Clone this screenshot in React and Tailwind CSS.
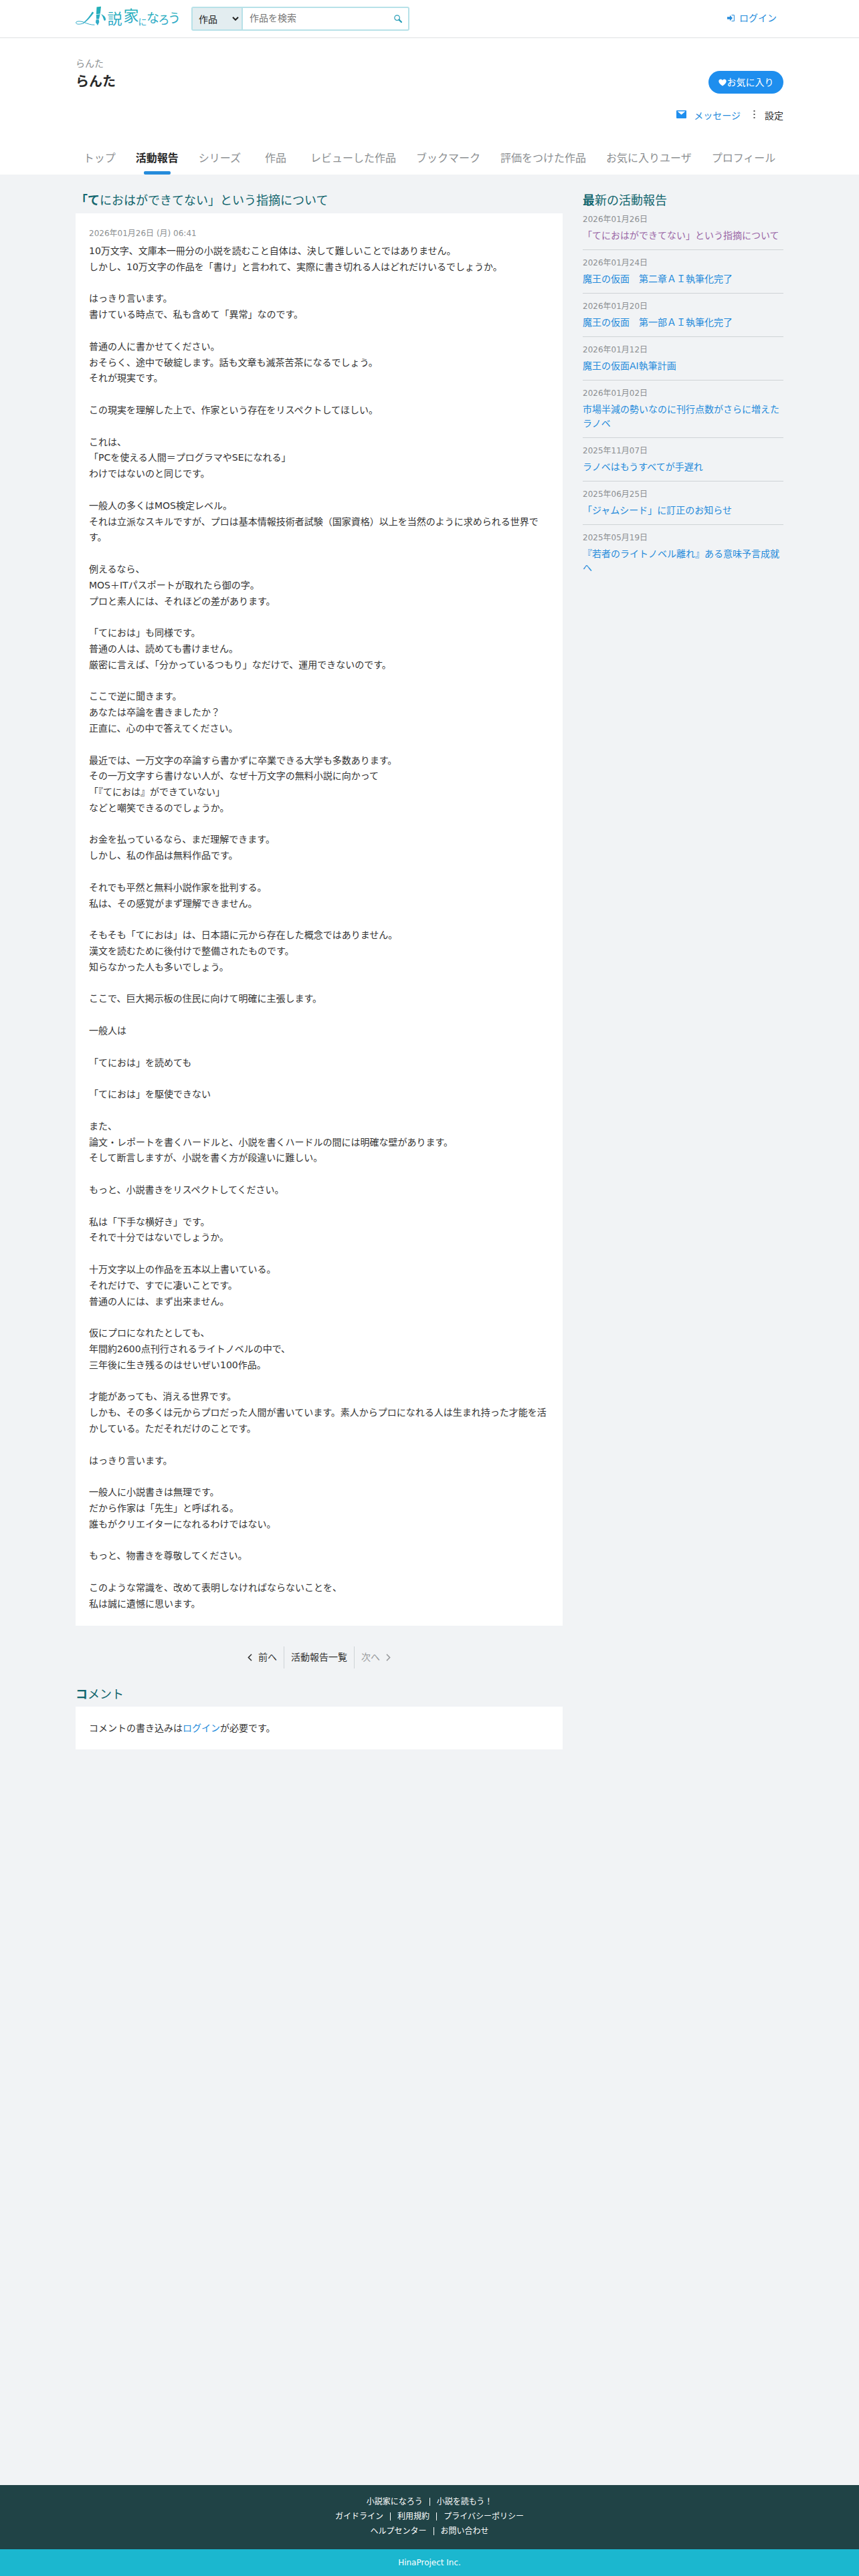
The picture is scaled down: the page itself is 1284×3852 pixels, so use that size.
const navItems = [
  "トップ",
  "活動報告",
  "シリーズ",
  "作品",
  "レビューした作品",
  "ブックマーク",
  "評価をつけた作品",
  "お気に入りユーザ",
  "プロフィール",
]

const article = `10万文字、文庫本一冊分の小説を読むこと自体は、決して難しいことではありません。
しかし、10万文字の作品を「書け」と言われて、実際に書き切れる人はどれだけいるでしょうか。

はっきり言います。
書けている時点で、私も含めて「異常」なのです。

普通の人に書かせてください。
おそらく、途中で破綻します。話も文章も滅茶苦茶になるでしょう。
それが現実です。

この現実を理解した上で、作家という存在をリスペクトしてほしい。

これは、
「PCを使える人間＝プログラマやSEになれる」
わけではないのと同じです。

一般人の多くはMOS検定レベル。
それは立派なスキルですが、プロは基本情報技術者試験（国家資格）以上を当然のように求められる世界です。

例えるなら、
MOS＋ITパスポートが取れたら御の字。
プロと素人には、それほどの差があります。

「てにおは」も同様です。
普通の人は、読めても書けません。
厳密に言えば、「分かっているつもり」なだけで、運用できないのです。

ここで逆に聞きます。
あなたは卒論を書きましたか？
正直に、心の中で答えてください。

最近では、一万文字の卒論すら書かずに卒業できる大学も多数あります。
その一万文字すら書けない人が、なぜ十万文字の無料小説に向かって
「『てにおは』ができていない」
などと嘲笑できるのでしょうか。

お金を払っているなら、まだ理解できます。
しかし、私の作品は無料作品です。

それでも平然と無料小説作家を批判する。
私は、その感覚がまず理解できません。

そもそも「てにおは」は、日本語に元から存在した概念ではありません。
漢文を読むために後付けで整備されたものです。
知らなかった人も多いでしょう。

ここで、巨大掲示板の住民に向けて明確に主張します。

一般人は

「てにおは」を読めても

「てにおは」を駆使できない

また、
論文・レポートを書くハードルと、小説を書くハードルの間には明確な壁があります。
そして断言しますが、小説を書く方が段違いに難しい。

もっと、小説書きをリスペクトしてください。

私は「下手な横好き」です。
それで十分ではないでしょうか。

十万文字以上の作品を五本以上書いている。
それだけで、すでに凄いことです。
普通の人には、まず出来ません。

仮にプロになれたとしても、
年間約2600点刊行されるライトノベルの中で、
三年後に生き残るのはせいぜい100作品。

才能があっても、消える世界です。
しかも、その多くは元からプロだった人間が書いています。素人からプロになれる人は生まれ持った才能を活かしている。ただそれだけのことです。

はっきり言います。

一般人に小説書きは無理です。
だから作家は「先生」と呼ばれる。
誰もがクリエイターになれるわけではない。

もっと、物書きを尊敬してください。

このような常識を、改めて表明しなければならないことを、
私は誠に遺憾に思います。`

const reports = [
  { date: "2026年01月26日", title: "「てにおはができてない」という指摘について", visited: true },
  { date: "2026年01月24日", title: "魔王の仮面　第二章ＡＩ執筆化完了" },
  { date: "2026年01月20日", title: "魔王の仮面　第一部ＡＩ執筆化完了" },
  { date: "2026年01月12日", title: "魔王の仮面AI執筆計画" },
  { date: "2026年01月02日", title: "市場半減の勢いなのに刊行点数がさらに増えたラノベ" },
  { date: "2025年11月07日", title: "ラノベはもうすべてが手遅れ" },
  { date: "2025年06月25日", title: "「ジャムシード」に訂正のお知らせ" },
  { date: "2025年05月19日", title: "『若者のライトノベル離れ』ある意味予言成就へ" },
]

const footerLinks = [
  ["小説家になろう", "小説を読もう！"],
  ["ガイドライン", "利用規約", "プライバシーポリシー"],
  ["ヘルプセンター", "お問い合わせ"],
]

function Logo() {
  return (
    <svg width="156" height="34" viewBox="0 0 156 34" className="shrink-0">
      <defs>
        <linearGradient id="logo" gradientUnits="userSpaceOnUse" x1="0" y1="0" x2="0" y2="34">
          <stop offset="0" stopColor="#20b0b4" />
          <stop offset="1" stopColor="#35a9cf" />
        </linearGradient>
      </defs>
      <g fill="url(#logo)">
        {/* ペンと飾り線 */}
        <path d="M31.5 1.5 L38 0.8 L36.8 11.5 L30.9 12.2 Z" />
        <path d="M30.8 13 L36.6 12.3 L35 19.5 L31 19.5 Z" />
        <path d="M30.6 20.3 L34.6 20.3 L35.3 24 L33 29 L30 24.5 Z" />
        <path d="M38 12 C42 13.5 45.5 17 45 20.5 C44.8 22 43 22.5 42.3 21 C41.3 18 40.5 15 38 12 Z" />
        <path d="M25 8.5 L27.3 10 C23 16 18 22 12 26 L11 25.4 C17 20.5 21 15 25 8.5 Z" />
        <path
          d="M12 25.7 C6 28 0.6 27.5 0.6 25 C0.8 22 8 22.5 13 24.5 C18 26.5 23 28.5 28 28.2"
          fill="none"
          stroke="url(#logo)"
          strokeWidth="1"
          strokeLinecap="round"
        />
        <text x="47.5" y="27" fontSize="22">説</text>
        <text x="71.5" y="22.5" fontSize="23">家</text>
        <text x="93.5" y="27.5" fontSize="13">に</text>
        <text x="106" y="24.5" fontSize="19">な</text>
        <text x="123.5" y="27" fontSize="17">ろ</text>
        <text x="138" y="24.5" fontSize="19">う</text>
      </g>
    </svg>
  )
}

function Header() {
  return (
    <header className="h-[57px] border-b border-[#dfe1e3] bg-white">
      <div className="mx-auto flex w-[1058px] items-start">
        <div className="w-[173px] pt-[9px]">
          <Logo />
        </div>
        <div className="mt-[10px] flex h-9 w-[326px] rounded-[3px] border-2 border-[#b7e1e8]">
          <div className="flex w-[75px] items-center justify-between border-r-2 border-[#b7e1e8] bg-[#e3edf0] pl-[9px] pr-1 text-sm text-[#222]">
            <span className="pt-px">作品</span>
            <svg width="10" height="6" viewBox="0 0 10 6" fill="none" stroke="#222" strokeWidth="2">
              <path d="M1 0.8 L5 4.8 L9 0.8" />
            </svg>
          </div>
          <div className="flex flex-1 items-center justify-between pl-[10px] pr-[9px] text-sm text-[#757575]">
            <span className="-mt-0.5">作品を検索</span>
            <svg width="12" height="12" viewBox="0 0 12 12" fill="none" stroke="#2a9fb8">
              <circle cx="4.6" cy="4.6" r="3.8" strokeWidth="1.2" />
              <path d="M7.6 7.6 L11 11" strokeWidth="2.2" strokeLinecap="round" />
            </svg>
          </div>
        </div>
        <a className="ml-auto mr-[10px] flex h-[54px] items-center text-sm text-[#258bdb]">
          <svg width="11" height="10" viewBox="0 0 11 10" className="mr-[7px]" fill="currentColor">
            <path d="M0 3.2 H4 V0.8 L8 5 L4 9.2 V6.8 H0 Z" />
            <path d="M6.5 0.6 H10.4 V9.4 H6.5" fill="none" stroke="currentColor" strokeWidth="1" />
          </svg>
          ログイン
        </a>
      </div>
    </header>
  )
}

function UserHead() {
  return (
    <div className="bg-white">
      <div className="mx-auto flex h-[157px] w-[1058px] justify-between">
        <div className="pt-[26px]">
          <p className="text-sm leading-[24px] text-[#8c8f92]">らんた</p>
          <p className="text-xl font-bold leading-[31px] text-[#292929]">らんた</p>
        </div>
        <div className="flex flex-col items-end pt-[49px]">
          <button className="flex h-[34px] w-[112px] items-center justify-center rounded-full bg-[#1e8eee] text-sm text-white">
            <svg width="12" height="11" viewBox="0 0 12 11" className="mr-px" fill="currentColor">
              <path d="M6 10.6 C2.5 7.8 0.3 5.8 0.3 3.4 C0.3 1.6 1.6 0.4 3.2 0.4 C4.4 0.4 5.5 1 6 2 C6.5 1 7.6 0.4 8.8 0.4 C10.4 0.4 11.7 1.6 11.7 3.4 C11.7 5.8 9.5 7.8 6 10.6 Z" />
            </svg>
            お気に入り
          </button>
          <div className="mt-[21px] flex items-center text-sm leading-[24px]">
            <svg width="15" height="12" viewBox="0 0 15 12" className="mb-1 mr-[11px]">
              <rect width="15" height="12" rx="1" fill="#1e8eee" />
              <path d="M1.5 1.5 H13.5 L7.5 6.5 Z" fill="#fff" />
            </svg>
            <a className="text-[#258bdb]">メッセージ</a>
            <svg width="3" height="12" viewBox="0 0 3 12" className="mb-1 ml-[19px] mr-[14px]" fill="#555">
              <rect x="0.5" y="0" width="2" height="2" />
              <rect x="0.5" y="5" width="2" height="2" />
              <rect x="0.5" y="10" width="2" height="2" />
            </svg>
            <span className="text-[#292929]">設定</span>
          </div>
        </div>
      </div>
      <nav className="mx-auto flex h-[47px] justify-center">
        {navItems.map((item) => (
          <div key={item} className="flex min-w-[74px] flex-col items-center justify-between px-[15px] text-base">
            <span
              className={
                item === "活動報告"
                  ? "whitespace-nowrap pt-[9px] font-bold leading-[28px] text-[#292929]"
                  : "whitespace-nowrap pt-[9px] leading-[28px] text-[#8c8f92]"
              }
            >
              {item}
            </span>
            {item === "活動報告" && <span className="h-[5px] w-10 rounded-[2px] bg-[#258bdb]" />}
          </div>
        ))}
      </nav>
    </div>
  )
}

function SectionTitle({ children }) {
  return (
    <h2 className="mb-[5.6px] text-lg leading-[27px] text-[#12666e] first-letter:font-bold">{children}</h2>
  )
}

function Pager() {
  return (
    <div className="mt-[31px] flex h-[33px] items-center justify-center text-sm text-[#333]">
      <div className="flex h-full items-center pr-[10px]">
        <svg width="7" height="11" viewBox="0 0 7 11" className="mr-[9px]" fill="none" stroke="currentColor" strokeWidth="1.6">
          <path d="M6 0.8 L1.4 5.5 L6 10.2" />
        </svg>
        前へ
      </div>
      <div className="flex h-full items-center border-x border-[#cfd3d6] px-[10px]">活動報告一覧</div>
      <div className="flex h-full items-center pl-[10px] text-[#97999b]">
        次へ
        <svg width="7" height="11" viewBox="0 0 7 11" className="ml-[9px]" fill="none" stroke="currentColor" strokeWidth="1.6">
          <path d="M1 0.8 L5.6 5.5 L1 10.2" />
        </svg>
      </div>
    </div>
  )
}

export default function App() {
  return (
    <div className="flex min-h-[3852px] flex-col bg-[#f1f3f5] font-['DejaVu_Sans','Noto_Sans_CJK_JP',sans-serif]" lang="ja">
      <Header />
      <UserHead />

      <div className="mx-auto flex w-[1058px] flex-1 items-start justify-between pt-[25px]">
        <main className="w-[728px]">
          <SectionTitle>「てにおはができてない」という指摘について</SectionTitle>
          <div className="bg-white p-5">
            <p className="mb-[5px] text-xs leading-[20.4px] text-[#8c8f92]">2026年01月26日 (月) 06:41</p>
            <div className="whitespace-pre-wrap text-sm leading-[23.8px] text-[#333]">{article}</div>
          </div>

          <Pager />

          <div className="mt-[25px]">
            <SectionTitle>コメント</SectionTitle>
            <div className="bg-white p-5 text-sm leading-[24px] text-[#333]">
              コメントの書き込みは<a className="text-[#258bdb]">ログイン</a>が必要です。
            </div>
          </div>
        </main>

        <aside className="w-[300px]">
          <SectionTitle>最新の活動報告</SectionTitle>
          <ul>
            {reports.map((report) => (
              <li
                key={report.date}
                className="border-b border-[#cfd3d6] py-[10px] first:pt-0 last:border-b-0"
              >
                <p className="mb-[5px] text-xs leading-[18px] text-[#8c8f92]">{report.date}</p>
                <a className={`block text-sm leading-[21px] ${report.visited ? "text-[#9a66a6]" : "text-[#258bdb]"}`}>
                  {report.title}
                </a>
              </li>
            ))}
          </ul>
        </aside>
      </div>

      <footer className="text-xs text-white">
        <div className="h-24 bg-[#204346] pt-[14px]">
          {footerLinks.map((row) => (
            <ul key={row[0]} className="flex h-[22px] items-center justify-center">
              {row.map((link, i) => (
                <li key={link} className="flex items-center">
                  {i > 0 && <span className="mx-[10px] h-3 w-px bg-white" />}
                  {link}
                </li>
              ))}
            </ul>
          ))}
        </div>
        <div className="flex h-10 items-center justify-center bg-[#1bb7cf]">HinaProject Inc.</div>
      </footer>
    </div>
  )
}
